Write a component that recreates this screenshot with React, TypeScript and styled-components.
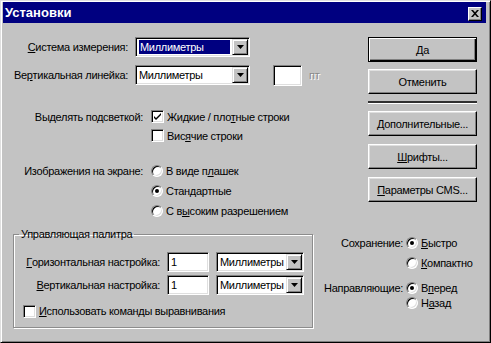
import React from "react";
import styled, { createGlobalStyle, css } from "styled-components";

const GlobalStyle = createGlobalStyle`
  html, body { margin: 0; padding: 0; background: #c3c3c3; }
  body { font-family: "Liberation Sans", Arial, sans-serif; font-size: 11px; letter-spacing: -0.3px; color: #000; }
  * { box-sizing: border-box; }
`;

const Window = styled.div`
  width: 491px;
  height: 343px;
  background: #c3c3c3;
  border: 1px solid;
  border-color: #dfdfdf #000 #000 #dfdfdf;
  box-shadow: inset 1px 1px #fff, inset -1px -1px #808080;
  padding: 1px 4px 3px 2px;
  display: flex;
  flex-direction: column;
`;

const TitleBar = styled.div`
  height: 21px;
  background: #000080;
  display: flex;
  align-items: center;
  justify-content: space-between;
  padding: 0 4px 0 2px;
`;

const Title = styled.span`
  color: #fff;
  font-weight: bold;
  font-size: 13px;
  letter-spacing: 0;
`;

const CloseButton = styled.span`
  width: 14px;
  height: 14px;
  margin-top: 2px;
  background: #c3c3c3;
  border: 1px solid;
  border-color: #fff #000 #000 #fff;
  box-shadow: inset -1px -1px #808080;
  display: flex;
  align-items: center;
  justify-content: center;
`;

const Body = styled.div`
  flex: 1;
  display: flex;
  flex-direction: column;
  padding: 14px 9px 0 10px;
`;

const TopSection = styled.div`
  display: flex;
  justify-content: space-between;
  align-items: flex-start;
`;

const LeftPane = styled.div`
  display: flex;
  flex-direction: column;
`;

const FieldGrid = styled.div`
  display: grid;
  grid-template-columns: 115px 115px auto;
  grid-auto-rows: 20px;
  column-gap: 7px;
  row-gap: 8px;
`;

const Label = styled.span`
  display: flex;
  align-items: center;
  justify-content: flex-end;
  white-space: nowrap;
`;

const Key = styled.u`
  text-decoration: underline;
  text-underline-offset: 1px;
`;

const Select = styled.div<{ $width: number }>`
  width: ${(p) => p.$width}px;
  height: 20px;
  background: #fff;
  border: 1px solid;
  border-color: #808080 #fff #fff #808080;
  box-shadow: inset 1px 1px #000, inset -1px -1px #dfdfdf;
  padding: 1px;
  display: flex;
  align-items: stretch;
`;

const SelectValue = styled.span<{ $active?: boolean }>`
  flex: 1;
  display: flex;
  align-items: center;
  padding-left: 2px;
  overflow: hidden;
  white-space: nowrap;
  ${(p) =>
    p.$active &&
    css`
      & > span {
        background: #000080;
        color: #fff;
        padding: 1px 1px;
        margin-right: 2px;
        flex: 1;
      }
    `}
`;

const DropButton = styled.span`
  width: 16px;
  flex: none;
  background: #c3c3c3;
  border: 1px solid;
  border-color: #dfdfdf #000 #000 #dfdfdf;
  box-shadow: inset 1px 1px #fff, inset -1px -1px #808080;
  display: flex;
  align-items: center;
  justify-content: center;
`;

const Extra = styled.div`
  display: flex;
  align-items: center;
  gap: 7px;
  margin-left: 16px;
`;

const TextBox = styled.div<{ $width: number; $height?: number }>`
  width: ${(p) => p.$width}px;
  height: ${(p) => p.$height ?? 20}px;
  background: #fff;
  border: 1px solid;
  border-color: #808080 #fff #fff #808080;
  box-shadow: inset 1px 1px #000, inset -1px -1px #dfdfdf;
  display: flex;
  align-items: center;
  padding-left: 3px;
`;

const Disabled = styled.span`
  color: #8a8a8a;
  text-shadow: 1px 1px #fff;
`;

const OptionSection = styled.div<{ $top: number }>`
  display: grid;
  grid-template-columns: 130px auto;
  column-gap: 8px;
  margin-top: ${(p) => p.$top}px;
`;

const OptionList = styled.div`
  display: flex;
  flex-direction: column;
`;

const OptionRow = styled.div<{ $h: number }>`
  height: ${(p) => p.$h}px;
  display: flex;
  align-items: center;
  gap: 3px;
  white-space: nowrap;
`;

const SectionLabel = styled(Label)<{ $h: number }>`
  height: ${(p) => p.$h}px;
`;

const CheckBox = styled.span`
  width: 13px;
  height: 13px;
  flex: none;
  background: #fff;
  border: 1px solid;
  border-color: #808080 #fff #fff #808080;
  box-shadow: inset 1px 1px #000, inset -1px -1px #dfdfdf;
  display: flex;
  align-items: center;
  justify-content: center;
`;

const Radio = styled.span<{ $on?: boolean }>`
  width: 12px;
  height: 12px;
  flex: none;
  border-radius: 50%;
  background: #fff;
  border: 1px solid;
  border-color: #808080 #fff #fff #808080;
  box-shadow: inset 1px 1px #000, inset -1px -1px #dfdfdf;
  display: flex;
  align-items: center;
  justify-content: center;
  &::after {
    content: "";
    width: 4px;
    height: 4px;
    border-radius: 50%;
    background: ${(p) => (p.$on ? "#000" : "transparent")};
  }
`;

const ButtonColumn = styled.div`
  width: 109px;
  display: flex;
  flex-direction: column;
  gap: 7px;
`;

const LowerButtons = styled.div`
  display: flex;
  flex-direction: column;
  gap: 8px;
`;

const Button = styled.button<{ $default?: boolean }>`
  width: 109px;
  height: 25px;
  padding: 0;
  margin: 0;
  font: inherit;
  letter-spacing: -0.3px;
  color: #000;
  background: #c3c3c3;
  border: 1px solid;
  border-color: #fff #000 #000 #fff;
  box-shadow: inset -1px -1px #808080, inset 1px 1px #dfdfdf;
  ${(p) =>
    p.$default &&
    css`
      border-color: #000;
      box-shadow: inset 1px 1px #fff, inset -1px -1px #000, inset -2px -2px #808080;
    `}
`;

const Separator = styled.div`
  height: 3px;
  background: #303030;
  border-bottom: 1px solid #fff;
`;

const BottomSection = styled.div`
  display: flex;
  align-items: flex-start;
  margin-top: 6px;
  gap: 6px;
`;

const GroupBox = styled.fieldset`
  width: 300px;
  height: 101px;
  margin: 0;
  padding: 11px 7px 0 8px;
  border: 1px solid #8c8c8c;
  box-shadow: 1px 1px #fff, inset 1px 1px #fff;
  display: flex;
  flex-direction: column;
`;

const Legend = styled.legend`
  padding: 0 2px;
  margin-left: -3px;
  line-height: 14px;
`;

const PaletteGrid = styled.div`
  display: grid;
  grid-template-columns: 138px 42px 88px;
  grid-auto-rows: 20px;
  column-gap: 7px;
  row-gap: 3px;
`;

const CheckRow = styled(OptionRow)`
  margin-top: 7px;
  padding-left: 1px;
`;

const RadioGrid = styled.div`
  display: grid;
  grid-template-columns: 84px auto;
  grid-auto-rows: 20px;
  column-gap: 3px;
  margin-top: 6px;
`;

const RadioItem = styled.div<{ $gapTop?: boolean }>`
  display: flex;
  align-items: center;
  gap: 3px;
  ${(p) => p.$gapTop && css`margin-top: 10px;`}
`;

const RadioLabel = styled(Label)<{ $gapTop?: boolean }>`
  ${(p) => p.$gapTop && css`margin-top: 10px;`}
`;

const Arrow = () => (
  <svg width="7" height="4" viewBox="0 0 7 4">
    <path d="M0 0h7L3.5 4z" fill="#000" />
  </svg>
);

const Check = () => (
  <svg width="9" height="9" viewBox="0 0 9 9">
    <path d="M1 4l2 2 5-5v2l-5 5-2-2z" fill="#000" />
  </svg>
);

const CloseX = () => (
  <svg width="8" height="7" viewBox="0 0 8 7">
    <path d="M0 0h2l2 2.2L6 0h2L5 3.5 8 7H6L4 4.8 2 7H0l3-3.5z" fill="#000" />
  </svg>
);

const Dropdown = ({ width, active }: { width: number; active?: boolean }) => (
  <Select $width={width}>
    <SelectValue $active={active}>
      <span>Миллиметры</span>
    </SelectValue>
    <DropButton>
      <Arrow />
    </DropButton>
  </Select>
);

export default function App() {
  return (
    <>
      <GlobalStyle />
      <Window>
        <TitleBar>
          <Title>Установки</Title>
          <CloseButton>
            <CloseX />
          </CloseButton>
        </TitleBar>
        <Body>
          <TopSection>
            <LeftPane>
              <FieldGrid>
                <Label>
                  <Key>С</Key>истема измерения:
                </Label>
                <Dropdown width={115} active />
                <span />
                <Label>
                  Ве<Key>р</Key>тикальная линейка:
                </Label>
                <Dropdown width={115} />
                <Extra>
                  <TextBox $width={29} $height={21} />
                  <Disabled>пт</Disabled>
                </Extra>
              </FieldGrid>

              <OptionSection $top={22}>
                <SectionLabel $h={19}>Выделять подсветкой:</SectionLabel>
                <OptionList>
                  <OptionRow $h={19}>
                    <CheckBox>
                      <Check />
                    </CheckBox>
                    <span>
                      Жидкие / пло<Key>т</Key>ные строки
                    </span>
                  </OptionRow>
                  <OptionRow $h={19}>
                    <CheckBox />
                    <span>
                      Вис<Key>я</Key>чие строки
                    </span>
                  </OptionRow>
                </OptionList>
              </OptionSection>

              <OptionSection $top={16}>
                <SectionLabel $h={20}>Изображения на экране:</SectionLabel>
                <OptionList>
                  <OptionRow $h={20}>
                    <Radio />
                    <span>
                      В виде п<Key>л</Key>ашек
                    </span>
                  </OptionRow>
                  <OptionRow $h={20}>
                    <Radio $on />
                    <span>
                      Стан<Key>д</Key>артные
                    </span>
                  </OptionRow>
                  <OptionRow $h={20}>
                    <Radio />
                    <span>
                      С в<Key>ы</Key>соким разрешением
                    </span>
                  </OptionRow>
                </OptionList>
              </OptionSection>
            </LeftPane>

            <ButtonColumn>
              <Button $default>Да</Button>
              <Button>Отменить</Button>
              <Separator />
              <LowerButtons>
                <Button>
                  <Key>Д</Key>ополнительные...
                </Button>
                <Button>
                  <Key>Ш</Key>рифты...
                </Button>
                <Button>
                  <Key>П</Key>араметры CMS...
                </Button>
              </LowerButtons>
            </ButtonColumn>
          </TopSection>

          <BottomSection>
            <GroupBox>
              <Legend>Управляющая палитра</Legend>
              <PaletteGrid>
                <Label>
                  <Key>Г</Key>оризонтальная настройка:
                </Label>
                <TextBox $width={42}>1</TextBox>
                <Dropdown width={88} />
                <Label>
                  <Key>В</Key>ертикальная настройка:
                </Label>
                <TextBox $width={42}>1</TextBox>
                <Dropdown width={88} />
              </PaletteGrid>
              <CheckRow $h={18}>
                <CheckBox />
                <span>
                  <Key>И</Key>спользовать команды выравнивания
                </span>
              </CheckRow>
            </GroupBox>

            <RadioGrid>
              <RadioLabel>Сохранение:</RadioLabel>
              <RadioItem>
                <Radio $on />
                <span>
                  <Key>Б</Key>ыстро
                </span>
              </RadioItem>
              <span />
              <RadioItem>
                <Radio />
                <span>
                  <Key>К</Key>омпактно
                </span>
              </RadioItem>
              <RadioLabel $gapTop>Направляющие:</RadioLabel>
              <RadioItem $gapTop>
                <Radio $on />
                <span>
                  В<Key>п</Key>еред
                </span>
              </RadioItem>
              <span />
              <RadioItem>
                <Radio />
                <span>
                  Н<Key>а</Key>зад
                </span>
              </RadioItem>
            </RadioGrid>
          </BottomSection>
        </Body>
      </Window>
    </>
  );
}
